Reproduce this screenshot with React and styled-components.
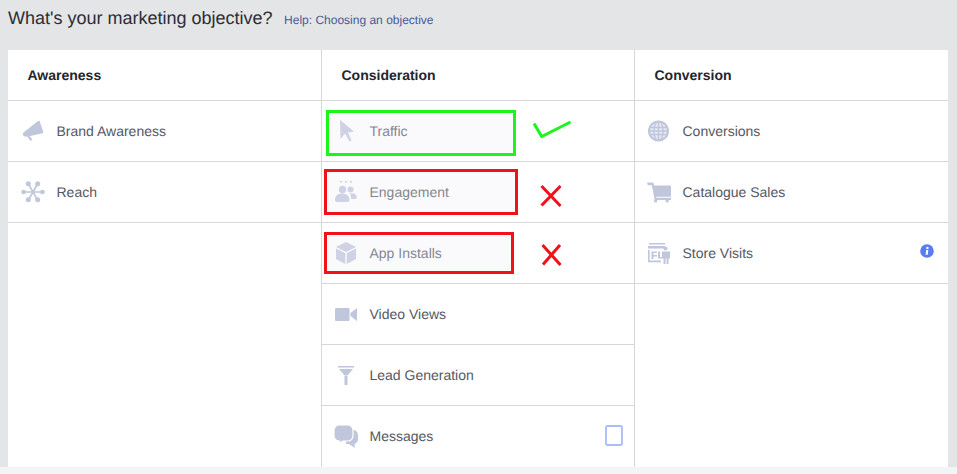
import React from 'react';
import styled, { createGlobalStyle } from 'styled-components';

const Global = createGlobalStyle`
  html, body { margin: 0; padding: 0; background: #e4e5e7; }
  body { font-family: "Liberation Sans", Arial, sans-serif; text-rendering: geometricPrecision; }
`;
const Page = styled.div`
  position: relative;
  width: 957px;
  height: 474px;
  overflow: hidden;
  background: linear-gradient(#e4e5e7 0, #e4e5e7 467px, #f3f4f6 467px);
  padding: 0 9px 7px 8px;
  box-sizing: border-box;
  display: flex;
  flex-direction: column;
`;
const TitleBar = styled.div`
  height: 50px;
  flex: none;
  display: flex;
  align-items: baseline;
  padding-top: 6px;
  box-sizing: border-box;
`;
const Title = styled.h1`
  margin: 0;
  font-size: 18px;
  line-height: 24px;
  font-weight: 400;
  color: #2b2e35;
`;
const Help = styled.a`
  margin-left: 11.500px;
  font-size: 12px;
  color: #475a96;
  text-decoration: none;
`;
const Grid = styled.div`
  flex: 1;
  display: grid;
  grid-template-columns: 314px 313px 313px;
  background: #fff;
`;
const Column = styled.section`
  border-right: ${p => (p.$last ? 0 : '1px solid #d5d7da')};
  display: flex;
  flex-direction: column;
  min-width: 0;
`;
const Heading = styled.div`
  height: 51px;
  flex: none;
  box-sizing: border-box;
  border-bottom: 1px solid #d5d7da;
  padding-left: 19.500px;
  font-size: 14px;
  font-weight: 700;
  color: #23262d;
  line-height: 50px;
`;
const Row = styled.div`
  height: 61px;
  flex: none;
  box-sizing: border-box;
  border-bottom: 1px solid ${p => (p.$plain ? 'transparent' : '#d5d7da')};
  display: flex;
  align-items: center;
  position: relative;
  font-size: 14px;
  color: #55585f;
`;
const IconSlot = styled.span`
  width: 24px;
  flex: none;
  display: flex;
  justify-content: center;
  margin-left: ${p => p.$ml}px;
  margin-right: ${p => p.$mr}px;
`;
const Badge = styled.span`
  position: absolute;
  right: ${p => p.$r}px;
  top: ${p => p.$t}px;
  display: flex;
`;
const Mark = styled.div`
  position: absolute;
  left: ${p => p.$x}px;
  top: ${p => p.$y}px;
  width: ${p => p.$w}px;
  height: ${p => p.$h}px;
  box-sizing: border-box;
  border: 3px solid ${p => p.$c};
  background: rgba(238, 238, 247, 0.3);
`;
const Scribble = styled.svg`
  position: absolute;
  left: ${p => p.$x}px;
  top: ${p => p.$y}px;
`;

const C = '#c0c6dc';
const Megaphone = () => (
  <svg width="22" height="22" viewBox="0 0 22 22" fill={C}>
    <path d="M1.500 12.500 16 1l1.500-.2 4 11.700-1 .8L6 16.500H3.500A2.400 2.400 0 0 1 1.500 12.500Z" />
    <path d="m5 16.500 2.500-.5 3 3.500-1.800 1.500Z" />
  </svg>
);
const Star = () => (
  <svg width="24" height="24" viewBox="0 0 24 24" fill={C} stroke={C}>
    <path strokeWidth="1.600" fill="none" d="M2 12h20M7.500 4l9 16M16.500 4l-9 16" />
    <circle cx="2.600" cy="12" r="2.300" stroke="none" /><circle cx="21.400" cy="12" r="2.300" stroke="none" />
    <circle cx="7.300" cy="3.800" r="2.500" stroke="none" /><circle cx="16.700" cy="3.800" r="2.500" stroke="none" />
    <circle cx="7.300" cy="19.800" r="2.500" stroke="none" /><circle cx="16.700" cy="19.800" r="2.500" stroke="none" />
  </svg>
);
const Cursor = () => (
  <svg width="14" height="22" viewBox="0 0 14 22" fill={C}>
    <path d="M0 0 .5 19 5 13.500l4.500 8 2-1L8 12.500l6-1Z" />
  </svg>
);
const People = () => (
  <svg width="22" height="22" viewBox="0 0 22 22" fill={C}>
    <rect x="5" y="0" width="2" height="1.500" /><rect x="10" y="0" width="2" height="1.500" /><rect x="15" y="0" width="2" height="1.500" />
    <circle cx="7.500" cy="8.500" r="3.700" /><circle cx="15.500" cy="8.500" r="3" />
    <path d="M0 19c0-4.500 3-6.500 7-6.500s7.500 2 7.500 6.500c0 1-1 2-2 2H2c-1 0-2-1-2-2Z" />
    <path d="M15 12.500c3.500-1 6.500.5 6.800 3.500 0 1-.8 2-1.800 2h-3.800c-.2-2.200-.5-4-1.200-5.500Z" />
  </svg>
);
const Box = () => (
  <svg width="20" height="22" viewBox="0 0 20 22" fill={C}>
    <path d="M10 0 20 5 10 10 0 5Z" />
    <path d="M0 6.500 9.300 11.200V22L0 17Z" />
    <path d="M20 6.500 10.700 11.200V22L20 17Z" />
  </svg>
);
const Video = () => (
  <svg width="22" height="13" viewBox="0 0 22 13" fill={C}>
    <rect x="0" y="0" width="14.500" height="13" rx="1" />
    <path d="M22 0v13l-6.500-5V5Z" />
  </svg>
);
const Funnel = () => (
  <svg width="16" height="19" viewBox="0 0 16 19" fill={C}>
    <rect x="0" y="0" width="16" height="1.500" />
    <path d="M1 3h14l-5.500 6.500h-3Z" />
    <rect x="6.500" y="10" width="3" height="9" />
  </svg>
);
const Chat = () => (
  <svg width="24" height="23" viewBox="0 0 24 23" fill={C}>
    <path d="M12 5h7a5 5 0 0 1 5 5v4.500a5 5 0 0 1-3.500 4.500l.5 4-6-4H12Z" />
    <path stroke="#fff" strokeWidth="1.200" d="M5 0h9a5 5 0 0 1 5 5v6a5 5 0 0 1-5 5H9l-4 2.500.5-2.500A5 5 0 0 1 0 11V5a5 5 0 0 1 5-5Z" />
  </svg>
);
const Globe = () => (
  <svg width="21" height="22" viewBox="0 0 21 22" fill="none" stroke={C}>
    <circle cx="10.500" cy="11" r="9.500" strokeWidth="2.200" fill="#e6e9f2" />
    <ellipse cx="10.500" cy="11" rx="4.700" ry="9.500" strokeWidth="1.400" />
    <path strokeWidth="1.400" d="M10.500 1.500v19M1 7.500h19M1 11h19M1 14.500h19" />
  </svg>
);
const Cart = () => (
  <svg width="25" height="21" viewBox="0 0 25 21" fill={C}>
    <path d="M0 0h6.500l1 3.300H25v11.700H9.500l.2 1H25v2.300H8L5 3H.8Z" />
    <circle cx="9" cy="19.300" r="1.700" /><circle cx="21" cy="19.300" r="1.700" />
  </svg>
);
const Store = () => (
  <svg width="22" height="21" viewBox="0 0 22 21" fill={C}>
    <rect x="1" y="0" width="16" height="1.500" />
    <rect x="0" y="3" width="17" height="2.500" />
    <rect x="0" y="7" width="1.600" height="11" />
    <rect x="0" y="17.500" width="13" height="1.800" />
    <path d="M3.500 8.500h5.500v1.500H5.500v2h3.500v1.500H5.500V16h-2ZM10 8.500h2v5.500h2v1.500h-4Z" />
    <circle cx="17.500" cy="5.500" r="2" />
    <path d="M14 8.500h8v7h-1.500V21h-2v-5.500h-1V21h-2v-5.500H14Z" />
  </svg>
);
const Info = () => (
  <svg width="14" height="14" viewBox="0 0 14 14">
    <circle cx="7" cy="7" r="6.800" fill="#5b7bf0" />
    <path d="M6.200 6h2.100l-.6 4.800H5.600Z" fill="#fff" />
    <circle cx="7.400" cy="3.900" r="1.200" fill="#fff" />
  </svg>
);
const Frame = () => (
  <svg width="18" height="21" viewBox="0 0 18 21" fill="none">
    <rect x="1" y="1" width="16" height="19" rx="1.500" stroke="#a8bcf5" strokeWidth="1.800" />
  </svg>
);

const Objective = ({ icon, ml = 13, mr = 10.5, plain, children, badge }) => (
  <Row $plain={plain}>
    <IconSlot $ml={ml} $mr={mr}>{icon}</IconSlot>
    {children}
    {badge}
  </Row>
);

export default function App() {
  return (
    <Page>
      <Global />
      <TitleBar>
        <Title>What's your marketing objective?</Title>
        <Help href="#">Help: Choosing an objective</Help>
      </TitleBar>
      <Grid>
        <Column>
          <Heading>Awareness</Heading>
          <Objective icon={<Megaphone />} mr={11.5}>Brand Awareness</Objective>
          <Objective icon={<Star />} mr={11.5}>Reach</Objective>
        </Column>
        <Column>
          <Heading>Consideration</Heading>
          <Objective icon={<Cursor />}>Traffic</Objective>
          <Objective icon={<People />} ml={12} mr={11.5}>Engagement</Objective>
          <Objective icon={<Box />} ml={12} mr={11.5}>App Installs</Objective>
          <Objective icon={<Video />} ml={12} mr={11.5}>Video Views</Objective>
          <Objective icon={<Funnel />} ml={12} mr={11.5}>Lead Generation</Objective>
          <Objective plain icon={<Chat />} ml={12} mr={11.5}
            badge={<Badge $r={11} $t={19}><Frame /></Badge>}>Messages</Objective>
        </Column>
        <Column $last>
          <Heading>Conversion</Heading>
          <Objective icon={<Globe />} ml={11} mr={12.5}>Conversions</Objective>
          <Objective icon={<Cart />} ml={12} mr={11.5}>Catalogue Sales</Objective>
          <Objective icon={<Store />} ml={12} mr={11.5}
            badge={<Badge $r={14} $t={21}><Info /></Badge>}>Store Visits</Objective>
        </Column>
      </Grid>
      <Mark $x={326} $y={110} $w={190} $h={46} $c="#1cf51c" />
      <Mark $x={324} $y={169} $w={194} $h={46} $c="#f01119" />
      <Mark $x={324} $y={232} $w={190} $h={42} $c="#f01119" />
      <Scribble $x={532} $y={120} width="40" height="20" viewBox="0 0 40 20" fill="none" stroke="#1cf51c" strokeWidth="3">
        <path d="M2 3.500 9.700 16.500 38.500 2" />
      </Scribble>
      <Scribble $x={538} $y={183} width="26" height="26" viewBox="0 0 26 26" fill="none" stroke="#f01119" strokeWidth="3">
        <path d="M3.500 3 22.500 23M22.500 3 3.500 22.500" />
      </Scribble>
      <Scribble $x={539} $y={242} width="26" height="26" viewBox="0 0 26 26" fill="none" stroke="#f01119" strokeWidth="3">
        <path d="M3.500 3 21.500 23M21 3 4 22.500" />
      </Scribble>
    </Page>
  );
}
